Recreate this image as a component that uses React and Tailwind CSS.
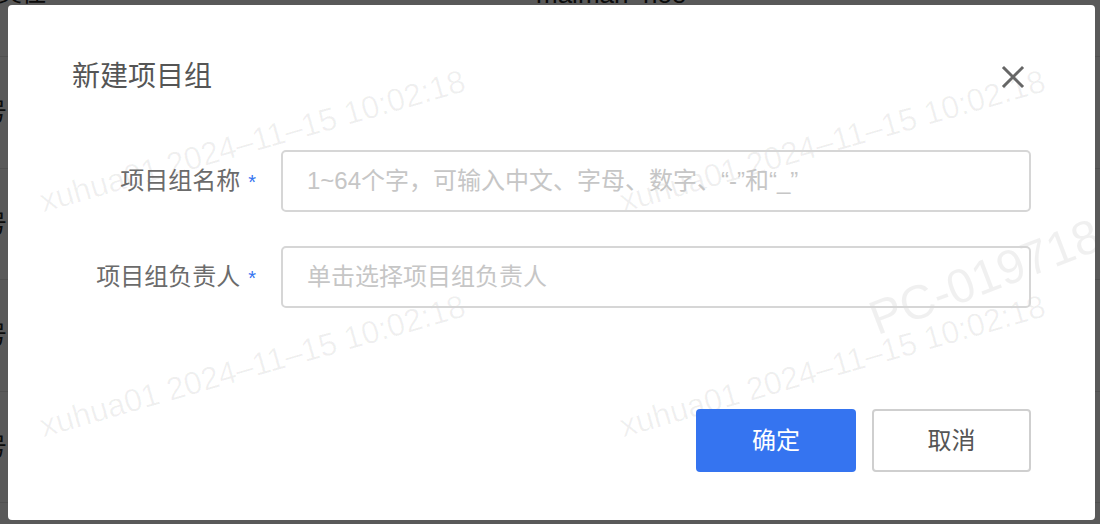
import { useState } from "react";

const font = "font-['Liberation_Sans','Noto_Sans_CJK_SC',sans-serif]";

const marks = [
  { id: "a", className: "left-[37px] top-[180px]" },
  { id: "b", className: "left-[37px] top-[405px]" },
  { id: "c", className: "left-[617px] top-[180px]" },
  { id: "d", className: "left-[617px] top-[405px]" },
];

function Watermarks() {
  return (
    <div className="pointer-events-none absolute inset-0 font-['Liberation_Sans',sans-serif] text-black/[0.06]">
      {marks.map((m) => (
        <span
          key={m.id}
          className={`absolute ${m.className} origin-bottom-left -rotate-[16deg] whitespace-nowrap text-[32px] leading-[32px]`}
        >
          xuhua01 2024–11–15 10:02:18
        </span>
      ))}
      <span className="absolute left-[872px] top-[290px] origin-bottom-left -rotate-[21deg] whitespace-nowrap text-[48px] leading-[48px]">
        PC-019718
      </span>
      <span className="absolute left-[262px] top-[508px] whitespace-nowrap text-[48px] leading-[48px]">
        0
      </span>
    </div>
  );
}

function Field({ label, placeholder, value, onChange }) {
  return (
    <div className="flex items-center gap-[23px]">
      <label className="w-[250px] flex-none pr-[2px] text-right text-[24px] leading-[32px] text-[#6b6b6b]">
        {label}
        <span className="ml-[8px] text-[20px] text-[#3574f0]">*</span>
      </label>
      <input
        value={value}
        onChange={(e) => onChange(e.target.value)}
        placeholder={placeholder}
        className="h-[62px] w-[750px] rounded-[5px] border-2 border-[#d6d6d6] bg-transparent px-[24px] text-[24px] text-[#333] outline-none placeholder:text-[#c6c6c6]"
      />
    </div>
  );
}

export default function App() {
  const [name, setName] = useState("");
  const [owner, setOwner] = useState("");

  return (
    <div className={`relative h-[524px] w-[1100px] overflow-hidden bg-white ${font}`}>
      {/* page behind the dialog */}
      <div className="text-[24px] leading-[24px] text-[#222]">
        <div className="flex h-[56px] items-start">
          <span className="-mt-[19px] ml-[-2px]">美佳</span>
          <span className="-mt-[18px] ml-[490px] text-[26px]">maiman_noe</span>
        </div>
        {[0, 1, 2, 3, 4].map((i) => (
          <div key={i} className="flex h-[111.5px] items-center border-t border-[#e6e6e6]">
            <span className="-ml-[17px]">号</span>
          </div>
        ))}
      </div>

      {/* overlay + dialog */}
      <div className="absolute inset-0 bg-black/[0.65] pl-[8px] pt-[5px]">
        <div className="relative h-[515px] w-[1087px] overflow-hidden rounded-[4px] bg-white">
          <Watermarks />

          <div className="relative">
            <div className="flex items-center justify-between pl-[64px] pr-[70px] pt-[52px]">
              <h2 className="text-[28px] leading-[40px] text-[#555]">新建项目组</h2>
              <button className="flex h-[24px] w-[24px] items-center justify-center">
                <svg width="24" height="24" viewBox="0 0 24 24" fill="none" stroke="#666" strokeWidth="3" strokeLinecap="square">
                  <path d="M3 3 L21 21 M21 3 L3 21" />
                </svg>
              </button>
            </div>

            <div className="mt-[53px] flex flex-col gap-[34px]">
              <Field
                label="项目组名称"
                placeholder="1~64个字，可输入中文、字母、数字、“-”和“_”"
                value={name}
                onChange={setName}
              />
              <Field label="项目组负责人" placeholder="单击选择项目组负责人" value={owner} onChange={setOwner} />
            </div>

            <div className="mt-[101px] flex justify-end gap-[16px] pr-[64px]">
              <button className="h-[63px] w-[160px] rounded-[4px] bg-[#3574f0] text-[24px] text-white">确定</button>
              <button className="h-[63px] w-[159px] rounded-[4px] border-2 border-[#cfcfcf] bg-white text-[24px] text-[#555]">
                取消
              </button>
            </div>
          </div>
        </div>
      </div>
    </div>
  );
}
